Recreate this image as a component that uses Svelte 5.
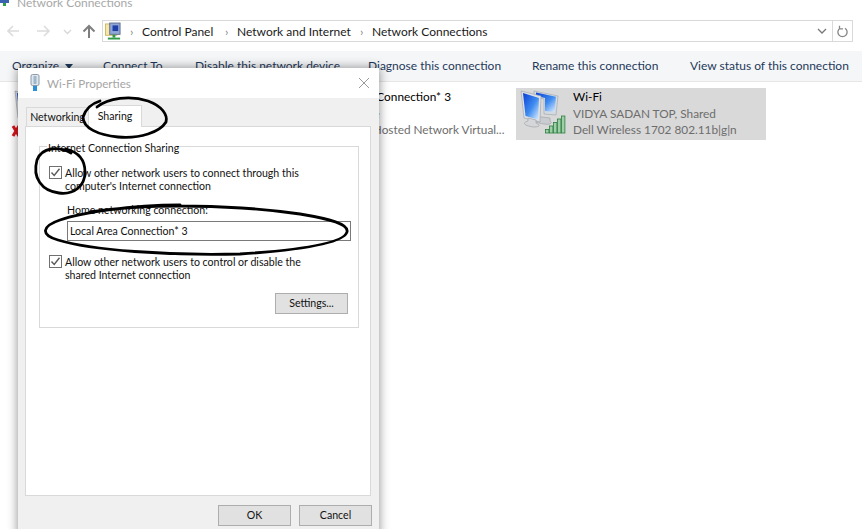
<script>
  const toolbar = ["Connect To", "Disable this network device", "Diagnose this connection", "Rename this connection", "View status of this connection"];
  const tiles = [
    { name: "Ethernet", status: "Network cable unplugged", device: "Realtek PCIe FE Family Controller", badge: "x" },
    { name: "Local Area Connection* 3", status: "Unavailable", device: "Microsoft Hosted Network Virtual...", badge: "" },
    { name: "Wi-Fi", status: "VIDYA SADAN TOP, Shared", device: "Dell Wireless 1702 802.11b|g|n", badge: "wifi", selected: true }
  ];
  const crumbs = ["Control Panel", "Network and Internet", "Network Connections"];
</script>

{#snippet check()}
  <span class="box">
    <svg width="11" height="11" viewBox="0 0 11 11"><path d="M1.5 5.5 L4.2 8.5 L9.5 1.8" fill="none" stroke="#5a5a5a" stroke-width="1.4" /></svg>
  </span>
{/snippet}

<div class="page">
  <div class="titlebar">
    <svg width="10" height="11" viewBox="0 0 10 11"><rect x="0" y="0" width="9" height="6" fill="#3a62b0" /><rect x="3" y="6" width="3" height="3" fill="#2f9a4a" /></svg>
    <span>Network Connections</span>
  </div>

  <div class="navrow">
    <svg class="navicons" width="90" height="16" viewBox="0 0 90 16">
      <path d="M1 8 H12 M6 3 L1 8 L6 13" fill="none" stroke="#dcdcdc" stroke-width="1.6" />
      <path d="M30 8 H42 M37 3 L42 8 L37 13" fill="none" stroke="#dcdcdc" stroke-width="1.6" />
      <path d="M57 7 L60.5 10.5 L64 7" fill="none" stroke="#d8d8d8" stroke-width="1.4" />
      <path d="M82 15 V3 M76.5 8.5 L82 3 L87.5 8.5" fill="none" stroke="#7f7f7f" stroke-width="2" />
    </svg>
    <div class="address">
      <svg class="addr-icon" width="16" height="19" viewBox="0 0 17 19">
        <rect x="0.5" y="1.5" width="12" height="12" fill="#f6e7a4" stroke="#c9b765" />
        <rect x="5" y="0.5" width="11" height="12" fill="#8fa6d6" stroke="#5f6f8f" />
        <rect x="8" y="3" width="6" height="6" fill="#1f3fa8" />
        <rect x="8" y="13" width="3" height="3" fill="#2f9a4a" />
        <rect x="3" y="16" width="13" height="2" fill="#2f9a4a" />
      </svg>
      <div class="crumbs">
        {#each crumbs as c}
          <div class="crumb"><span class="sep">›</span><span>{c}</span></div>
        {/each}
      </div>
      <svg class="chev" width="10" height="6" viewBox="0 0 10 6"><path d="M1 1 L5 5 L9 1" fill="none" stroke="#777" stroke-width="1.3" /></svg>
      <div class="refresh">
        <svg width="11" height="13" viewBox="0 0 11 13"><path d="M3 3.2 A4.6 4.6 0 1 0 8 3.2 M2.5 0.8 V3.8 H6" fill="none" stroke="#888" stroke-width="1.3" /></svg>
      </div>
    </div>
  </div>

  <div class="toolbar">
    <span>Organize <i class="caret"></i></span>
    {#each toolbar as item}
      <span>{item}</span>
    {/each}
  </div>

  <div class="tiles">
    {#each tiles as t}
      <div class="tile" class:selected={t.selected}>
        <svg class="tile-icon" width="48" height="46" viewBox="0 0 48 46">
          <defs>
            <linearGradient id="scr" x1="0" y1="0" x2="1" y2="1"><stop offset="0" stop-color="#0b3fd6" /><stop offset="0.55" stop-color="#3f8cf0" /><stop offset="1" stop-color="#e2f1ff" /></linearGradient>
          </defs>
          <path d="M14 1 L38 6 L36 25 L24 24 L24 9 L14 7 Z" fill="#d5dae0" stroke="#9aa3ad" stroke-width="0.6" />
          <path d="M16 2.5 L36 6.8 L34.5 22 L25 21 L25 8 L16 6 Z" fill="url(#scr)" />
          <path d="M14 26 L30 28 V31 C33 33 30 35 24 34 C16 33 12 30 15 29 Z" fill="#c9ccd0" stroke="#9a9ea3" stroke-width="0.6" />
          <path d="M1 1 L21 6 L20 32 L4 28 Z" fill="#dde1e6" stroke="#98a1aa" stroke-width="0.6" />
          <path d="M3 3 L19 8 L18 29.5 L5.5 26 Z" fill="url(#scr)" />
          <path d="M8 28 L16 30 V33 C21 35 20 37 14 37 C5 36 1 33 8 31 Z" fill="#d4d6d9" stroke="#9a9ea3" stroke-width="0.6" />
          {#if t.badge === "wifi"}
            <g fill="#9ed0a8" stroke="#2f7d43" stroke-width="0.8">
              <rect x="25.5" y="39.5" width="3.4" height="3.5" />
              <rect x="29.5" y="36" width="3.4" height="7" />
              <rect x="33.5" y="32.5" width="3.4" height="10.5" />
              <rect x="37.5" y="29" width="3.4" height="14" />
              <rect x="41.5" y="26" width="3.4" height="17" />
            </g>
          {:else if t.badge === "x"}
            <path d="M-1 36 L5 46 M5 36 L-1 46" stroke="#d8141c" stroke-width="3" />
          {/if}
        </svg>
        <div class="tile-text">
          <div class="tile-name">{t.name}</div>
          <div>{t.status}</div>
          <div>{t.device}</div>
        </div>
      </div>
    {/each}
  </div>

  <div class="dialog">
    <div class="dlg-title">
      <svg width="10" height="18" viewBox="0 0 10 18">
        <rect x="1" y="0.5" width="8" height="11" rx="1.5" fill="#dfe6ee" stroke="#8d9aa8" />
        <rect x="3.5" y="2" width="3" height="8" fill="#9fb6cc" />
        <rect x="3" y="12" width="4" height="5" fill="#2d8fd6" />
      </svg>
      <span class="dlg-name">Wi-Fi Properties</span>
      <svg class="close" width="12" height="12" viewBox="0 0 12 12"><path d="M1 1 L11 11 M11 1 L1 11" stroke="#9a9a9a" stroke-width="1" /></svg>
    </div>

    <div class="dlg-body">
      <div class="tabs">
        <span class="tab">Networking</span>
        <span class="tab active">Sharing</span>
      </div>
      <div class="panel">
        <fieldset>
          <legend>Internet Connection Sharing</legend>
          <div class="opt">
            {@render check()}
            <span class="opt-text">Allow other network users to connect through this<br />computer's Internet connection</span>
          </div>
          <div class="home">Home networking connection:</div>
          <div class="input">Local Area Connection* 3</div>
          <div class="opt second">
            {@render check()}
            <span class="opt-text">Allow other network users to control or disable the<br />shared Internet connection</span>
          </div>
          <div class="settings-row"><span class="btn">Settings...</span></div>
        </fieldset>
      </div>
      <div class="actions">
        <span class="btn">OK</span>
        <span class="btn">Cancel</span>
      </div>
    </div>
  </div>

  <!-- marker rings someone drew over the screenshot -->
  <svg class="ink" width="862" height="529" viewBox="0 0 862 529">
    <path d="M97 107 C108 98 130 95 148 101 C162 106 168 115 166 122 C160 132 140 139 118 137 C98 135 83 128 83 117 C85 111 90 104 100 101" />
    <path d="M71 153 C58 146 42 147 37 160 C32 178 42 191 59 193 C74 195 85 186 85 172 C85 160 78 152 66 149" />
    <path d="M90 212 C150 203 240 205 300 214 C330 219 349 224 347 232 C344 243 300 250 240 254 C170 256 90 250 58 240 C40 235 42 226 60 220 C80 213 130 205 180 205" />
  </svg>
</div>

<style>
  :global(body) {
    margin: 0;
    background: #fff;
  }

  .page {
    position: relative;
    width: 862px;
    height: 529px;
    overflow: hidden;
    font-family: Lato, sans-serif;
    font-size: 12px;
    color: #1a1a1a;
  }

  .titlebar {
    height: 11px;
    overflow: hidden;
    display: flex;
    gap: 7px;
    color: #a8a8a8;
    line-height: 6px;
  }

  .titlebar svg {
    margin-top: -3px;
  }

  .navrow {
    display: flex;
    align-items: center;
    height: 22px;
    margin-top: 9px;
    padding: 0 9px 0 7px;
  }

  .navicons {
    flex: none;
    margin-right: 5px;
  }

  .address {
    flex: 1;
    height: 20px;
    display: flex;
    align-items: center;
    border: 1px solid #d9d9d9;
    padding-left: 2px;
  }

  .addr-icon {
    flex: none;
  }

  .crumbs {
    flex: 1;
    display: grid;
    grid-template-columns: 95px 135px auto;
    align-items: center;
    padding-left: 4px;
    white-space: nowrap;
  }

  .crumb {
    display: flex;
  }

  .sep {
    width: 17px;
    padding-left: 5px;
    box-sizing: border-box;
    color: #888;
  }

  .chev {
    margin-right: 5px;
  }

  .refresh {
    width: 19px;
    height: 20px;
    border-left: 1px solid #d9d9d9;
    display: flex;
    align-items: center;
    justify-content: center;
  }

  .toolbar {
    margin-top: 9px;
    height: 29px;
    padding: 0 0 1px 12px;
    display: grid;
    grid-template-columns: 91px 92px 173px 164px 158px auto;
    align-items: center;
    background: #f5f6f7;
    border-bottom: 1px solid #e6e6e6;
    color: #1e395b;
  }

  .caret {
    display: inline-block;
    border: 4px solid transparent;
    border-top: 5px solid #1e395b;
    border-bottom: 0;
    margin-left: 3px;
    vertical-align: middle;
  }

  .tiles {
    display: flex;
    gap: 3px;
    padding: 6px 0 0 10px;
  }

  .tile {
    width: 250px;
    height: 52px;
    display: flex;
    flex: none;
    color: #6d6d6d;
    font-size: 11.8px;
    line-height: 16.5px;
  }

  .tile.selected {
    background: #d9d9d9;
  }

  .tile-icon {
    flex: none;
    margin: 2px 5px 0 4px;
    overflow: visible;
  }

  .tile-text {
    white-space: nowrap;
    padding-top: 1px;
  }

  .tile-name {
    color: #000;
  }

  .dialog {
    position: absolute;
    left: 18px;
    top: 68px;
    width: 361px;
    height: 470px;
    background: #f0f0f0;
    box-shadow: 0 0 10px rgba(0, 0, 0, 0.45);
    display: flex;
    flex-direction: column;
    font-size: 10.6px;
    color: #111;
  }

  .dlg-title {
    height: 30px;
    flex: none;
    background: #fff;
    display: flex;
    align-items: center;
    padding: 0 9px 0 12px;
    box-sizing: border-box;
  }

  .dlg-name {
    flex: 1;
    margin-left: 7px;
    color: #a5a5a5;
    font-size: 11.6px;
  }

  .dlg-body {
    flex: 1;
    display: flex;
    flex-direction: column;
    padding: 7px 7px 0 7px;
  }

  .tabs {
    height: 21px;
    display: flex;
    align-items: flex-end;
    padding-left: 1px;
  }

  .tab {
    width: 61px;
    height: 18px;
    line-height: 18px;
    text-align: center;
    border: 1px solid #d9d9d9;
    border-bottom: 0;
    background: #f0f0f0;
  }

  .tab.active {
    width: 52px;
    height: 21px;
    background: #fff;
    margin-bottom: -1px;
    position: relative;
    border-left: 0;
    line-height: 20px;
  }

  .panel {
    height: 370px;
    margin-right: 1px;
    background: #fff;
    border: 1px solid #d9d9d9;
    padding: 10px 11px 0 13px;
    box-sizing: border-box;
  }

  fieldset {
    margin: 0;
    padding: 10px 0 0 9px;
    height: 191px;
    box-sizing: border-box;
    border: 1px solid #d9d9d9;
  }

  legend {
    margin-left: -2px;
    padding: 4px 1px 0;
    line-height: 14px;
  }

  .opt {
    display: flex;
    gap: 3px;
    line-height: 13px;
  }

  .opt-text {
    padding-top: 1.5px;
  }

  .second {
    margin-top: 13px;
  }

  .box {
    width: 11px;
    height: 11px;
    flex: none;
    border: 1px solid #707070;
    margin-top: 1px;
    background: #fff;
    display: block;
  }

  .box svg {
    display: block;
  }

  .home {
    margin: 11.5px 0 4px 18px;
    line-height: 13px;
  }

  .input {
    height: 18px;
    margin: 0 7px 0 18px;
    border: 1px solid #7a7a7a;
    padding-left: 2px;
    line-height: 18px;
  }

  .settings-row {
    display: flex;
    justify-content: flex-end;
    margin: 11.5px 10px 0 0;
  }

  .btn {
    width: 71px;
    height: 19px;
    line-height: 19px;
    text-align: center;
    background: #e1e1e1;
    border: 1px solid #adadad;
    flex: none;
  }

  .actions {
    display: flex;
    justify-content: flex-end;
    gap: 8px;
    margin-top: 9px;
  }

  .ink {
    position: absolute;
    inset: 0;
    pointer-events: none;
  }

  .ink path {
    fill: none;
    stroke: #000;
    stroke-width: 2.8;
    stroke-linecap: round;
  }
</style>
